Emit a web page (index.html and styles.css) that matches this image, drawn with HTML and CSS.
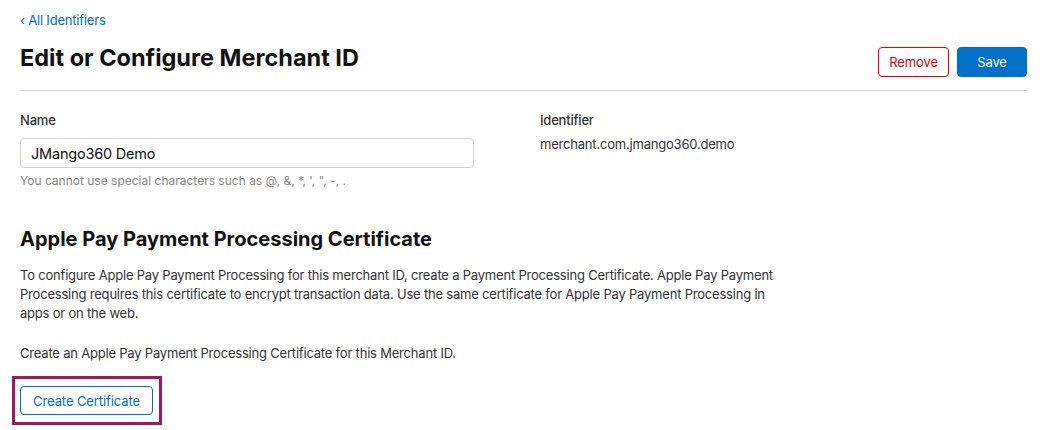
FILE: index.html
```html
<!DOCTYPE html>
<html lang="en">

<head>
    <meta charset="UTF-8">
    <title>Edit or Configure Merchant ID</title>
    <link rel="stylesheet" href="styles.css">
</head>

<body>
    <div class="container">
        <a class="back" href="#">&lsaquo; All Identifiers</a>
        <div class="page-head">
            <h1>Edit or Configure Merchant ID</h1>
            <div class="actions">
                <button class="danger">Remove</button>
                <button class="primary">Save</button>
            </div>
        </div>
        <div class="fields">
            <div class="field name-field">
                <label>Name</label>
                <input type="text" class="text-input" value="JMango360 Demo">
                <div class="hint">You cannot use special characters such as @, &amp;, *, ', ", -, .</div>
            </div>
            <div class="field">
                <label>Identifier</label>
                <div class="value">merchant.com.jmango360.demo</div>
            </div>
        </div>
        <div class="section">
            <h2>Apple Pay Payment Processing Certificate</h2>
            <p class="desc">To configure Apple Pay Payment Processing for this merchant ID, create a Payment Processing Certificate. Apple Pay Payment Processing requires this certificate to encrypt transaction data. Use the same certificate for Apple Pay Payment Processing in apps or on the web.</p>
            <p class="desc">Create an Apple Pay Payment Processing Certificate for this Merchant ID.</p>
            <div class="highlight">
                <button class="outline">Create Certificate</button>
            </div>
        </div>
    </div>
</body>

</html>
```

FILE: styles.css
```css
* {
    padding: 0;
    margin: 0;
    box-sizing: border-box;
}

html,
body {
    width: 100%;
    height: 100%;
    background: #fff;
}

body {
    font-family: Inter, "Liberation Sans", sans-serif;
    color: #333;
    letter-spacing: -0.2px;
}

.container {
    padding: 11px 20px 0 20px;
}

.back {
    display: block;
    font-size: 13px;
    line-height: 18px;
    color: #0070c9;
    text-decoration: none;
}

.page-head {
    display: flex;
    align-items: flex-start;
    justify-content: space-between;
    margin-top: 18px;
    padding-bottom: 13px;
    border-bottom: 1px solid #d6d6d6;
}

.page-head h1 {
    font-size: 23.5px;
    line-height: 30px;
    margin-top: -4px;
    font-weight: 700;
    color: #111;
    letter-spacing: 0;
}

.actions {
    display: flex;
    gap: 8px;
}

button {
    font-family: inherit;
    font-size: 13px;
    letter-spacing: -0.1px;
    height: 30px;
    border-radius: 4px;
    padding: 0;
    white-space: nowrap;
    background: #fff;
    cursor: pointer;
}

button.danger {
    border: 1px solid #e30000;
    color: #e30000;
    width: 71px;
}

button.primary {
    border: 1px solid #0070c9;
    background: #0070c9;
    color: #fff;
    width: 70px;
}

button.outline {
    display: block;
    border: 1px solid #0070c9;
    color: #0070c9;
    width: 133px;
    height: 29px;
}

.fields {
    display: flex;
    margin-top: 20px;
}

.field label {
    display: block;
    font-size: 13px;
    line-height: 18px;
    font-weight: 500;
    color: #333;
}

.name-field {
    width: 520px;
}

.text-input {
    display: block;
    width: 454px;
    height: 30px;
    margin-top: 9px;
    padding: 0 10px;
    border: 1px solid #d2d2d7;
    border-radius: 4px;
    font-family: inherit;
    font-size: 14.5px;
    letter-spacing: -0.2px;
    color: #111;
    outline: none;
}

.hint {
    font-size: 12px;
    line-height: 16px;
    letter-spacing: 0;
    margin-top: 5px;
    color: #888;
}

.value {
    font-size: 13px;
    line-height: 18px;
    margin-top: 6px;
    color: #333;
}

.section {
    margin-top: 37px;
}

.section h2 {
    font-size: 20px;
    line-height: 26px;
    font-weight: 700;
    color: #111;
    letter-spacing: 0;
}

.desc {
    font-size: 13px;
    line-height: 19px;
    max-width: 768px;
    margin-top: 21px;
}

.section h2 + .desc {
    margin-top: 14px;
}

.highlight {
    display: inline-block;
    margin: 13px 0 0 -8px;
    padding: 7px 6px 7px 5px;
    border: 3px solid #9e1a5c;
}
```
